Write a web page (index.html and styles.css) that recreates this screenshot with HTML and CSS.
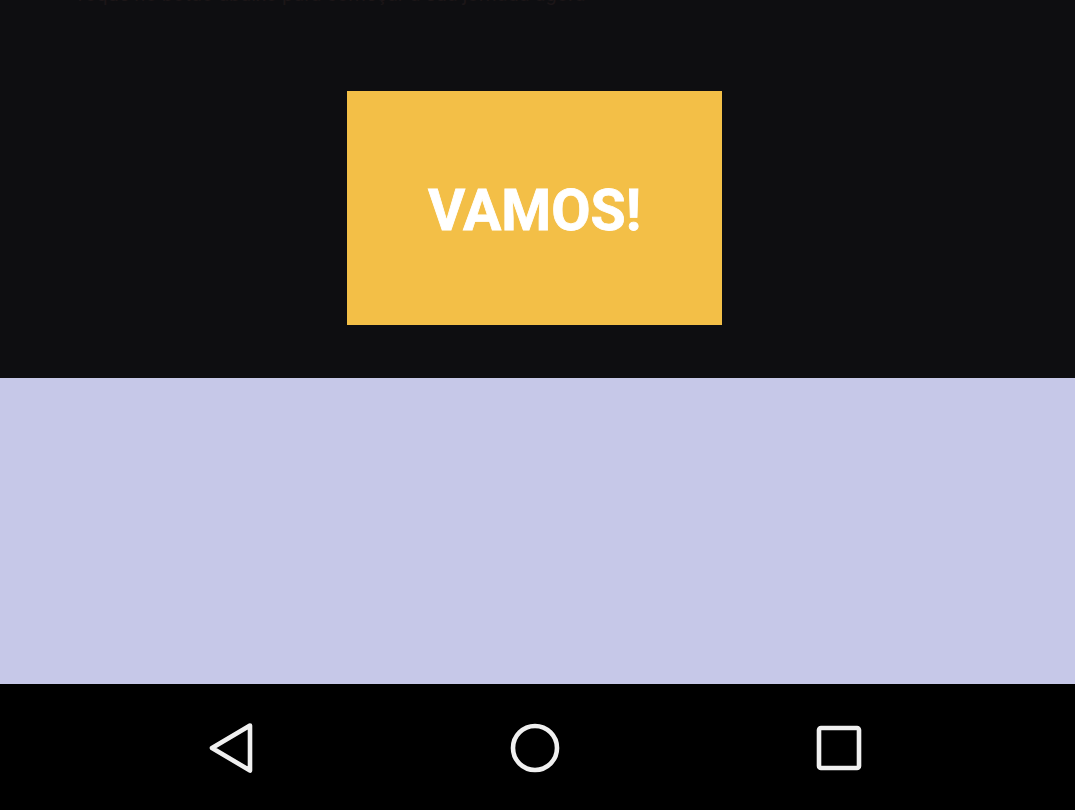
FILE: index.html
```html
<!DOCTYPE html>
<html lang="pt">
<head>
<meta charset="utf-8">
<title>Vamos</title>
<link rel="stylesheet" href="styles.css">
</head>
<body>
<div class="screen">
  <section class="top">
    <p class="faded">Toque no botão abaixo para começar a sua jornada agora</p>
    <button class="cta">VAMOS!</button>
  </section>
  <section class="lavender"></section>
  <nav class="navbar">
    <svg class="nav-icon" width="48" height="52" viewBox="0 0 48 52">
      <path d="M43 3.5 L5 26 L43 48.5 Z" fill="none" stroke="#f0f0f0" stroke-width="4.6" stroke-linejoin="round"/>
    </svg>
    <svg class="nav-icon" width="50" height="50" viewBox="0 0 50 50">
      <circle cx="25" cy="25" r="22" fill="none" stroke="#f0f0f0" stroke-width="4.6"/>
    </svg>
    <svg class="nav-icon" width="46" height="46" viewBox="0 0 46 46">
      <rect x="3" y="3" width="40" height="40" rx="2" fill="none" stroke="#f0f0f0" stroke-width="4.6"/>
    </svg>
  </nav>
</div>
</body>
</html>
```
FILE: styles.css
```css
html, body {
  margin: 0;
  padding: 0;
  background: #000;
}
.screen {
  width: 1075px;
  height: 810px;
  display: flex;
  flex-direction: column;
  overflow: hidden;
  font-family: Roboto, "Liberation Sans", sans-serif;
}
.top {
  height: 378px;
  background: #0e0e11;
  display: flex;
  flex-direction: column;
  align-items: center;
  overflow: hidden;
}
.faded {
  margin: -16px 0 0 0;
  align-self: flex-start;
  padding-left: 74px;
  font-size: 20px;
  line-height: 20px;
  color: #1c1618;
  white-space: nowrap;
}
.cta {
  margin-top: 87px;
  margin-right: 6px;
  width: 375px;
  height: 234px;
  border: none;
  background: #f3bf47;
  color: #fff;
  font-family: Roboto, "Liberation Sans", sans-serif;
  font-weight: 700;
  font-size: 57px;
  -webkit-text-stroke: 0.8px #fff;
  padding: 0;
  padding-top: 4px;
}
.lavender {
  height: 306px;
  background: #c6c8e8;
}
.navbar {
  flex: 1;
  background: #000;
  display: flex;
  align-items: center;
  padding-top: 2px;
}
.nav-icon:nth-child(1) { margin-left: 207px; }
.nav-icon:nth-child(2) { margin-left: 255px; }
.nav-icon:nth-child(3) { margin-left: 256px; }
```
